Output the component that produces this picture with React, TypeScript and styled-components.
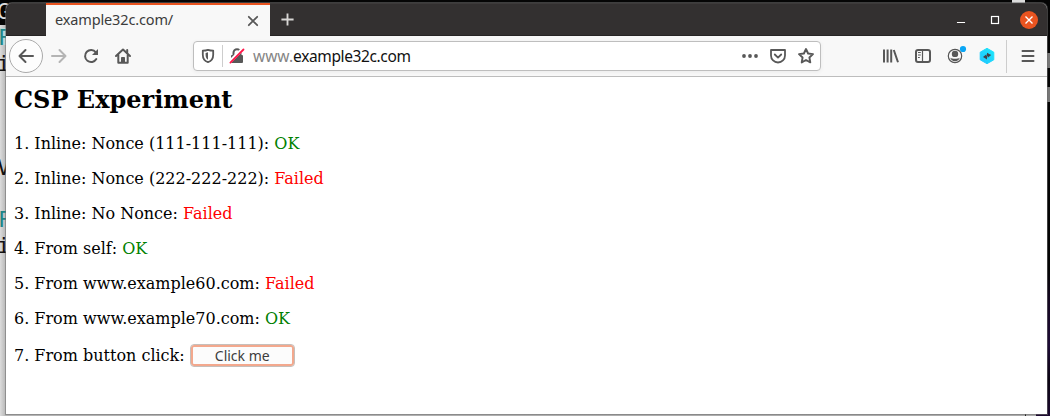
import React from "react";
import styled, { createGlobalStyle } from "styled-components";

const GlobalStyle = createGlobalStyle`
  * { box-sizing: border-box; }
  body { margin: 0; overflow: hidden; background: #050505; }
`;

const Desktop = styled.div`
  position: relative;
  width: 1050px;
  height: 416px;
  padding: 3px 3px 2px 6px;
  overflow: hidden;
  background: #050505;
`;

const BackPane = styled.div`
  position: absolute;
  left: 0;
  top: 25px;
  width: 1036px;
  height: 391px;
  background: linear-gradient(90deg, #dcdcdc 0, #b4b4b4 6px, #aaa 100%);
`;

const BackEdge = styled.div<{ $x: number; $y: number; $w: number; $h: number; $color: string }>`
  position: absolute;
  left: ${(p) => p.$x}px;
  top: ${(p) => p.$y}px;
  width: ${(p) => p.$w}px;
  height: ${(p) => p.$h}px;
  background: ${(p) => p.$color};
`;

const BackText = styled.span<{ $y: number; $x?: number; $color?: string }>`
  position: absolute;
  left: ${(p) => p.$x ?? -2}px;
  top: ${(p) => p.$y}px;
  font: 22px/26px "DejaVu Sans Mono", monospace;
  color: ${(p) => p.$color ?? "#111"};
`;

const Window = styled.main`
  position: relative;
  display: flex;
  flex-direction: column;
  width: 1041px;
  height: 411px;
  overflow: hidden;
  border-radius: 6px 6px 0 0;
  background: #fff;
  box-shadow: 0 0 0 1px rgba(110, 110, 110, 0.55);
`;

const TitleBar = styled.header`
  display: flex;
  flex: none;
  height: 33px;
  padding-left: 40px;
  background: #333030;
  border-top: 1px solid #3d3a3a;
  border-bottom: 1px solid #262424;
`;

const Tab = styled.div`
  display: flex;
  align-items: center;
  justify-content: space-between;
  width: 224px;
  height: 33px;
  margin-top: -1px;
  padding: 0 10px 0 9px;
  background: #f8f8f8;
  border-top: 2px solid #e95420;
  z-index: 1;
`;

const TabTitle = styled.span`
  padding-bottom: 3px;
  font: 14.5px/20px "Noto Sans", sans-serif;
  letter-spacing: -0.14px;
  color: #3c3c3c;
`;

const NewTab = styled.div`
  display: flex;
  align-items: center;
  margin-left: 10px;
`;

const WindowButtons = styled.div`
  display: flex;
  align-items: center;
  gap: 16px;
  margin-left: auto;
  padding-right: 9px;
`;

const CloseButton = styled.div`
  display: flex;
  width: 18px;
  height: 18px;
  border-radius: 50%;
  background: #e95420;
`;

const Toolbar = styled.nav`
  display: flex;
  flex: none;
  align-items: center;
  height: 41px;
  padding: 0 11px 0 3px;
  background: #f8f8f8;
  border-bottom: 1px solid #bdbdbd;
`;

const BackButton = styled.div`
  display: flex;
  align-items: center;
  justify-content: center;
  width: 34px;
  height: 34px;
  border: 1px solid #aaa;
  border-radius: 50%;
  background: #fdfdfd;
`;

const NavIcons = styled.div`
  display: flex;
  gap: 16px;
  margin-left: 8px;
`;

const AddressBar = styled.div`
  display: flex;
  align-items: center;
  width: 628px;
  height: 30px;
  margin-left: 62px;
  padding: 0 6px;
  border: 1px solid #bebebe;
  border-radius: 4px;
  background: #fff;
  box-shadow: 0 1px 4px rgba(0, 0, 0, 0.06);
`;

const Divider = styled.div<{ $h: number }>`
  width: 1px;
  height: ${(p) => p.$h}px;
  background: #cdcdcd;
`;

const ShieldSlot = styled.div`
  display: flex;
  margin-right: 6px;
`;

const LockSlot = styled.div`
  display: flex;
  margin: 0 8px 0 6px;
`;

const Url = styled.span`
  font: 15.5px/22px "Noto Sans", sans-serif;
  letter-spacing: -0.38px;
  color: #111;
`;

const Dim = styled.span`
  color: #858585;
  letter-spacing: 0;
`;

const BarActions = styled.div`
  display: flex;
  gap: 12px;
  margin-left: auto;
`;

const Extensions = styled.div`
  display: flex;
  gap: 16px;
  margin-left: auto;
  margin-right: 11px;
`;

const MenuSlot = styled.div`
  display: flex;
  margin-left: 13px;
`;

const Page = styled.section`
  padding: 9px 8px;
  font: 16px/19px "DejaVu Serif", serif;
  color: #000;
`;

const Heading = styled.h2`
  margin: 0 0 20px;
  font-size: 24px;
  line-height: 28px;
`;

const Line = styled.p<{ $tall?: boolean }>`
  display: flex;
  align-items: center;
  height: ${(p) => (p.$tall ? 23 : 19)}px;
  margin: 0 0 16px;
  white-space: pre;
`;

const Result = styled.span<{ $ok: boolean }>`
  color: ${(p) => (p.$ok ? "#008000" : "#ff0000")};
`;

const ClickButton = styled.button`
  width: 105px;
  height: 23px;
  padding: 0;
  border: 1px solid #c5bfbb;
  border-radius: 4px;
  background: #fcfcfc;
  box-shadow: inset 0 0 0 2px #f3a88d;
  font: 14px/18px "Noto Sans", sans-serif;
  color: #3d3d3d;
`;

const tests: { label: string; ok: boolean }[] = [
  { label: "1. Inline: Nonce (111-111-111): ", ok: true },
  { label: "2. Inline: Nonce (222-222-222): ", ok: false },
  { label: "3. Inline: No Nonce: ", ok: false },
  { label: "4. From self: ", ok: true },
  { label: "5. From www.example60.com: ", ok: false },
  { label: "6. From www.example70.com: ", ok: true },
];

const INK = "#585858";

function Icon({ size = 16, color = INK, children }: { size?: number; color?: string; children: React.ReactNode }) {
  return (
    <svg width={size} height={size} viewBox="0 0 16 16" fill="none" stroke={color} strokeWidth="2" strokeLinecap="round" strokeLinejoin="round" overflow="visible">
      {children}
    </svg>
  );
}

export default function App() {
  return (
    <>
      <GlobalStyle />
      <Desktop>
        <BackPane />
        <BackText $y={-1} $x={-3} $color="#ddd">G</BackText>
        <BackEdge $x={0} $y={28} $w={6} $h={17} $color="#b9d7d7" />
        <BackText $y={25} $color="#1d8588">F</BackText>
        <BackText $y={51} $x={-3}>i</BackText>
        <BackText $y={155} $x={-3}>V</BackText>
        <BackText $y={207} $color="#1d8588">F</BackText>
        <BackText $y={233} $x={-3}>i</BackText>
        <BackEdge $x={1012} $y={0} $w={13} $h={3} $color="#ddd" />
        <BackEdge $x={1036} $y={0} $w={14} $h={416} $color="linear-gradient(#040404 0 270px, #140720 300px, #1e0b36 345px, #0b0412 380px, #1c0930 416px)" />
        <BackEdge $x={1025} $y={414} $w={1} $h={2} $color="#222" />
        <BackEdge $x={1047} $y={53} $w={3} $h={15} $color="#777" />
        <BackEdge $x={1047} $y={87} $w={3} $h={15} $color="#777" />
        <Window>
          <TitleBar>
            <Tab>
              <TabTitle>example32c.com/</TabTitle>
              <Icon size={14}><path d="M3.2 3.2l9.6 9.6M12.8 3.2L3.2 12.8" strokeWidth="2" /></Icon>
            </Tab>
            <NewTab>
              <Icon size={15} color="#d8d6d4"><path d="M8 1.5v13M1.5 8h13" strokeLinecap="butt" /></Icon>
            </NewTab>
            <WindowButtons>
              <Icon size={18} color="#fff"><path d="M4.4 10.2h7.2" strokeWidth="1" strokeLinecap="butt" /></Icon>
              <svg width="18" height="18" fill="none" stroke="#fff"><rect x="5.5" y="5.5" width="7" height="7" strokeWidth="1.2" /></svg>
              <CloseButton>
                <svg width="18" height="18" stroke="#fff" strokeWidth="1.4"><path d="M5.5 5.5l7 7M12.5 5.5l-7 7" /></svg>
              </CloseButton>
            </WindowButtons>
          </TitleBar>
          <Toolbar>
            <BackButton><Icon><path d="M15 8H1.5M7.5 2L1.5 8l6 6" /></Icon></BackButton>
            <NavIcons>
              <Icon color="#b4b4b4"><path d="M1 8h13.5M8.5 2l6 6-6 6" /></Icon>
              <Icon>
                <path d="M13.3 11A6 6 0 1 1 12.8 4.3" />
                <path d="M15 1v6H9z" fill={INK} stroke="none" />
              </Icon>
              <Icon>
                <path d="M1 8l7-6.5L15 8M3.3 7v7.8h9.4V7" />
                <path d="M6.5 14V9.5h3V14z" fill={INK} strokeWidth="1" />
                <path d="M12.2 2v3" />
              </Icon>
            </NavIcons>
            <AddressBar>
              <ShieldSlot>
                <Icon>
                  <path d="M8 1.8c1.8.6 3.5.8 5.2.8v4.1c0 4-1.9 6.4-5.2 7.5-3.3-1.1-5.2-3.5-5.2-7.5V2.6c1.7 0 3.4-.2 5.2-.8z" strokeWidth="1.8" />
                  <path d="M8 4.3L5.6 5v2c0 2.3.9 3.8 2.4 4.8z" fill={INK} stroke="none" />
                </Icon>
              </ShieldSlot>
              <Divider $h={22} />
              <LockSlot>
                <Icon>
                  <path d="M4.5 7V4.8a3.5 3.5 0 0 1 7 0V7" />
                  <rect x="2" y="7" width="12" height="8" rx="1" fill={INK} stroke="none" />
                  <path d="M1.2 13.3L14 .8" stroke="#fff" strokeWidth="3.6" strokeLinecap="butt" />
                  <path d="M1.4 14.6L14.5 1.5" stroke="#ff1648" strokeWidth="1.8" />
                </Icon>
              </LockSlot>
              <Url><Dim>www.</Dim>example32c.com</Url>
              <BarActions>
                <Icon><g fill={INK} stroke="none"><circle cx="2" cy="8" r="1.9" /><circle cx="8" cy="8" r="1.9" /><circle cx="14" cy="8" r="1.9" /></g></Icon>
                <Icon><path d="M1 2h14v5.5a7 7 0 0 1-14 0zM4.8 6.5L8 9.6l3.2-3.1" strokeWidth="1.8" /></Icon>
                <Icon><path d="M8 1l2.1 4.5 4.9.6-3.6 3.4.9 4.9L8 12l-4.3 2.4.9-4.9L1 6.1l4.9-.6z" strokeWidth="1.9" /></Icon>
              </BarActions>
            </AddressBar>
            <Extensions>
              <Icon><path d="M1 1.5v13M4.6 1.5v13M8.2 1.5v13M10.8 2L15 14.3" strokeLinecap="butt" strokeWidth="2" /></Icon>
              <Icon>
                <rect x="1" y="2" width="14" height="12" rx="2" strokeWidth="2" />
                <path d="M7.5 2v12" strokeWidth="1.2" />
                <path d="M3 4.5h2.8M3 7h2.8M3 9.5h1.8" strokeWidth="1" strokeLinecap="butt" />
              </Icon>
              <Icon>
                <circle cx="8" cy="8" r="6.7" strokeWidth="1.2" />
                <circle cx="8" cy="5.9" r="3.2" fill={INK} stroke="none" />
                <path d="M3.3 9.8c2 1.3 7.4 1.3 9.4 0-.5 2.2-2.4 3.5-4.7 3.5S3.8 12 3.3 9.8z" fill={INK} stroke="none" />
                <circle cx="16" cy="1" r="3.1" fill="#0aa6f5" stroke="none" />
              </Icon>
              <svg width="16" height="16" viewBox="0 0 16 16" overflow="visible">
                <defs><linearGradient id="hex" x1="0" y1="1" x2="1" y2="0"><stop stopColor="#20c4ff" /><stop offset="1" stopColor="#1be8fa" /></linearGradient></defs>
                <path d="M8 .3l6.8 3.9v7.6L8 15.7l-6.8-3.9V4.2z" fill="url(#hex)" stroke="url(#hex)" strokeLinejoin="round" />
                <path d="M4 9l3.5-2.7v1.4H8V11.5L4 9zM12.2 7L8.7 9.7V8.3H8V4.7L12.2 7z" fill="#40434a" />
              </svg>
            </Extensions>
            <Divider $h={33} />
            <MenuSlot><Icon><path d="M2.5 3h11M2.5 8h11M2.5 13h11" strokeWidth="2" /></Icon></MenuSlot>
          </Toolbar>
          <Page>
            <Heading>CSP Experiment</Heading>
            {tests.map((t) => (
              <Line key={t.label}>{t.label}<Result $ok={t.ok}>{t.ok ? "OK" : "Failed"}</Result></Line>
            ))}
            <Line $tall>{"7. From button click: "}<ClickButton>Click me</ClickButton></Line>
          </Page>
        </Window>
      </Desktop>
    </>
  );
}
